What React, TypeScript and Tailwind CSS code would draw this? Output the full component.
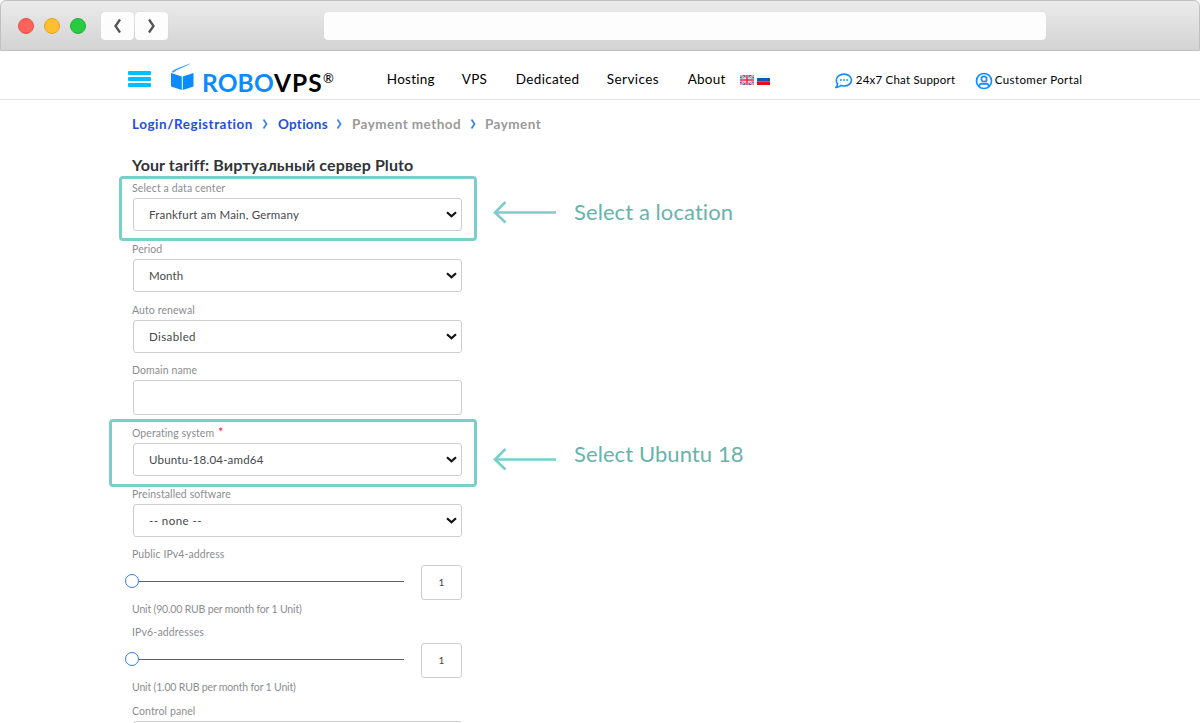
import type { ReactNode } from "react";

function NavButton({ d }: { d: string }) {
  return (
    <button className="flex h-[28px] w-[33px] items-center justify-center rounded-[4px] bg-[#fdfdfd] shadow-[0_0_1px_#c8c8c8]">
      <svg width="10" height="16" viewBox="0 0 10 16" fill="none" stroke="#555" strokeWidth="2.300">
        <path d={d} />
      </svg>
    </button>
  );
}

function BrowserBar() {
  return (
    <div className="flex h-[51px] shrink-0 items-center rounded-t-[6px] border border-[#c0c0c0] bg-linear-to-b from-[#ebebeb] to-[#d3d3d3] pl-[17px]">
      <div className="flex gap-[10px]">
        <span className="size-[16px] rounded-full border border-[#e2504c] bg-[#ff6259]" />
        <span className="size-[16px] rounded-full border border-[#e0a32c] bg-[#ffbf2f]" />
        <span className="size-[16px] rounded-full border border-[#25ad37] bg-[#29cc41]" />
      </div>
      <div className="ml-[15px] flex gap-px">
        <NavButton d="M7 1.500 2.500 8 7 14.500" />
        <NavButton d="M2 1.500 6.500 8 2 14.500" />
      </div>
      <div className="ml-[156px] h-[28px] w-[722px] rounded-[4px] bg-[#fdfdfd] shadow-[0_0_1px_#c8c8c8]" />
    </div>
  );
}

function Logo() {
  return (
    <div className="ml-[20px] mt-[5px] flex h-[30px]">
      <svg width="23" height="29" viewBox="0 0 23 29">
        <path d="M0 10 10.800 13.500V27L0 23.500z" fill="#0a8cff" />
        <path d="M11.800 13.500 22.500 10v13.500L11.800 27z" fill="#0a8cff" />
        <path d="M.3 9.200C3 5.800 11 4 19.500.3 14 4.500 7 6 2.500 9.400z" fill="#3aa2ff" />
      </svg>
      <div className="ml-[8px] mt-[5px] flex font-['Lato'] text-[24.500px] leading-[30px] font-bold">
        <span className="w-[72px] tracking-[0.150px] text-[#0a8cff]">ROBO</span>
        <span className="w-[49px] tracking-[1px] text-black">VPS</span>
        <span className="-mt-[5px] text-[13px] leading-[30px] font-medium text-black">®</span>
      </div>
    </div>
  );
}

function Flags() {
  return (
    <div className="ml-[14px] mt-[4px] flex gap-[3px]">
      <svg width="14" height="10" viewBox="0 0 14 10">
        <path d="M0 0h14v10H0z" fill="#56629f" />
        <path d="m0 0 14 10M14 0 0 10" stroke="#eed5e0" strokeWidth="2.200" />
        <path d="m0 0 14 10M14 0 0 10" stroke="#dd6080" strokeWidth=".8" />
        <path d="M7 0v10M0 5h14" stroke="#fff" strokeWidth="2.800" />
        <path d="M7 0v10M0 5h14" stroke="#e32345" strokeWidth="1.500" />
      </svg>
      <svg width="13" height="10" viewBox="0 0 13 10">
        <path d="M0 0h13v3H0z" fill="#f4f4f4" />
        <path d="M0 3h13v3.500H0z" fill="#1556b5" />
        <path d="M0 6.500h13V10H0z" fill="#f00a19" />
      </svg>
    </div>
  );
}

function Header() {
  return (
    <header className="flex h-[49px] shrink-0 items-center border-b border-[#e6e6e6] pl-[128px] text-black">
      <div className="mt-[8px] flex flex-col gap-[2px]">
        <span className="h-[4px] w-[23px] rounded-[1px] bg-[#00bfff]" />
        <span className="h-[4px] w-[23px] rounded-[1px] bg-[#00bfff]" />
        <span className="h-[4px] w-[23px] rounded-[1px] bg-[#00bfff]" />
      </div>
      <Logo />
      <nav className="mt-[7px] flex text-[13.500px] leading-[20px]">
        <span className="ml-[53px] w-[75px] tracking-[0.250px]">Hosting</span>
        <span className="w-[54px] tracking-[0.200px]">VPS</span>
        <span className="w-[91px] tracking-[0.330px]">Dedicated</span>
        <span className="w-[81px] tracking-[0.420px]">Services</span>
        <span className="w-[38px] tracking-[0.200px]">About</span>
      </nav>
      <div className="mt-[6px] flex items-center text-[11.500px] leading-[20px]">
        <Flags />
        <svg className="ml-[65px] mt-[5px]" width="18" height="16" viewBox="0 0 18 16" fill="none" stroke="#168cff" strokeWidth="1.700">
          <path d="M9 1.200c4.300 0 7.500 2.600 7.500 5.900S13.300 13 9 13c-1.200 0-2.200-.2-3.200-.5C4.600 13.700 3 14.300 1 14.300c.9-.9 1.500-2 1.600-3.200C1.700 10 1.300 8.700 1.300 7.100 1.300 3.800 4.700 1.200 9 1.200z" />
          <path d="M5 7h1.800M8.200 7H10M11.400 7h1.800" strokeWidth="1.600" />
        </svg>
        <span className="ml-[3px] mt-[4px] w-[103px] whitespace-nowrap tracking-[0.220px]">24x7 Chat Support</span>
        <svg className="ml-[16px] mt-[5px]" width="18" height="18" viewBox="0 0 18 18" fill="none" stroke="#168cff" strokeWidth="1.700">
          <circle cx="9" cy="9" r="7.500" />
          <circle cx="9" cy="7" r="2.700" />
          <path d="M4 14.300c.4-1.900 1.600-2.700 3-2.700 1.400.5 2.600.5 4 0 1.400 0 2.600.8 3 2.700" />
        </svg>
        <span className="ml-[2px] mt-[4px] whitespace-nowrap tracking-[0.380px]">Customer Portal</span>
      </div>
    </header>
  );
}

function Crumb({ className, children }: { className: string; children: ReactNode }) {
  return <span className={"whitespace-nowrap " + className}>{children}</span>;
}

function Sep() {
  return (
    <svg className="ml-[9px] mr-[8px]" width="7" height="10" viewBox="0 0 7 10" fill="none" stroke="#3b82e6" strokeWidth="1.700">
      <path d="m1.500.5 3 4.500-3 4.500" />
    </svg>
  );
}

function Field({ label, height, labelStyle = "tracking-[0.100px]", required, outline, children }: { label: string; height: string; labelStyle?: string; required?: boolean; outline?: ReactNode; children: ReactNode }) {
  return (
    <div className={"relative shrink-0 " + height}>
      <div className={"mb-[2px] h-[16px] whitespace-nowrap text-[10.500px] leading-[16px] text-[#8b8d8f] " + labelStyle}>
        {label}
        {required && <span className="ml-[4px] text-[13px] leading-[10px] text-[#f0284a]">*</span>}
      </div>
      {children}
      {outline}
    </div>
  );
}

function SelectBox({ value, textStyle = "tracking-[0.200px]" }: { value: string; textStyle?: string }) {
  return (
    <div className="ml-px flex h-[33px] w-[329px] items-center justify-between rounded-[3px] border border-[#cfcfcf] pl-[15px] pr-[4px] text-[11.500px] text-[#44484c]">
      <span className={textStyle}>{value}</span>
      <svg width="11" height="7" viewBox="0 0 11 7" fill="none" stroke="#111" strokeWidth="2.200">
        <path d="m1 1.200 4.500 4 4.500-4" />
      </svg>
    </div>
  );
}

function SliderRow({ note }: { note: string }) {
  return (
    <>
      <div className="ml-px flex h-[36px] w-[329px] items-center justify-between">
        <div className="-ml-[8px] mb-[2px] flex items-center">
          <span className="size-[14px] rounded-full border-[1.500px] border-[#3280e8] bg-white" />
          <span className="h-px w-[265px] bg-[#606060]" />
        </div>
        <div className="flex h-[35px] w-[41px] items-center justify-center rounded-[3px] border border-[#cfcfcf] text-[10px] text-[#44484c]">1</div>
      </div>
      <div className="mt-px h-[16px] whitespace-nowrap text-[10.500px] leading-[16px] tracking-[-0.170px] text-[#8b8d8f]">{note}</div>
    </>
  );
}

function Callout({ box, arrow, text, children }: { box: string; arrow: string; text: string; children: string }) {
  return (
    <>
      <div className={"absolute rounded-[4px] border-[#7bcfca] " + box} />
      <svg className={"absolute left-[361px] " + arrow} width="64" height="24" viewBox="0 0 64 24" fill="none" stroke="#7bcfca" strokeWidth="2.600">
        <path d="M12.500 2 2 12.500l10.500 10M2 12.500h61" />
      </svg>
      <div className={"absolute left-[442px] whitespace-nowrap font-['Lato'] text-[22px] leading-[28px] text-[#68b3ac] " + text}>{children}</div>
    </>
  );
}

export default function App() {
  return (
    <div className="flex h-[723px] w-[1200px] flex-col overflow-hidden bg-white font-['Lato','Noto_Sans',sans-serif]">
      <BrowserBar />
      <Header />
      <main className="flex flex-col pl-[132px]">
        <div className="mt-[15px] flex h-[18px] items-center text-[13.500px] font-bold">
          <Crumb className="w-[121px] tracking-[0.530px] text-[#2450d8]">Login/Registration</Crumb>
          <Sep />
          <Crumb className="ml-px w-[49px] tracking-[0.250px] text-[#2450d8]">Options</Crumb>
          <Sep />
          <Crumb className="ml-px w-[109px] tracking-[0.450px] text-[#9a9a9a]">Payment method</Crumb>
          <Sep />
          <Crumb className="tracking-[0.450px] text-[#9a9a9a]">Payment</Crumb>
        </div>
        <h1 className="mt-[23px] h-[24px] whitespace-nowrap text-[16px] leading-[18px] tracking-[0.110px] font-bold text-[#303438]">Your tariff: Виртуальный сервер Pluto</h1>
        <Field
          label="Select a data center"
          height="h-[61px]"
          labelStyle="tracking-[0.130px]"
          outline={
            <Callout box="-left-[13px] -top-[4px] h-[65px] w-[358px] border-x-[3px] border-y-[3px]" arrow="top-[20px]" text="top-[18px] tracking-[0.080px]">
              Select a location
            </Callout>
          }
        >
          <SelectBox value="Frankfurt am Main, Germany" />
        </Field>
        <Field label="Period" height="h-[61px]">
          <SelectBox value="Month" textStyle="tracking-[0.050px]" />
        </Field>
        <Field label="Auto renewal" height="h-[60px]">
          <SelectBox value="Disabled" textStyle="tracking-[0.400px]" />
        </Field>
        <Field label="Domain name" height="h-[63px]">
          <div className="ml-px h-[35px] w-[329px] rounded-[3px] border border-[#cfcfcf]" />
        </Field>
        <Field
          label="Operating system"
          height="h-[61px]"
          labelStyle="tracking-[0.060px]"
          required
          outline={
            <Callout box="-left-[23px] -top-[6px] h-[68px] w-[368px] border-x-[3px] border-y-[3px]" arrow="top-[22px]" text="top-[15px] tracking-[0.080px]">
              Select Ubuntu 18
            </Callout>
          }
        >
          <SelectBox value="Ubuntu-18.04-amd64" />
        </Field>
        <Field label="Preinstalled software" height="h-[60px]">
          <SelectBox value="-- none --" textStyle="tracking-[0.450px]" />
        </Field>
        <Field label="Public IPv4-address" height="h-[78px]">
          <SliderRow note="Unit (90.00 RUB per month for 1 Unit)" />
        </Field>
        <Field label="IPv6-addresses" height="h-[79px]" labelStyle="tracking-[0.150px]">
          <SliderRow note="Unit (1.00 RUB per month for 1 Unit)" />
        </Field>
        <Field label="Control panel" height="h-[61px]">
          <SelectBox value="" />
        </Field>
      </main>
    </div>
  );
}
